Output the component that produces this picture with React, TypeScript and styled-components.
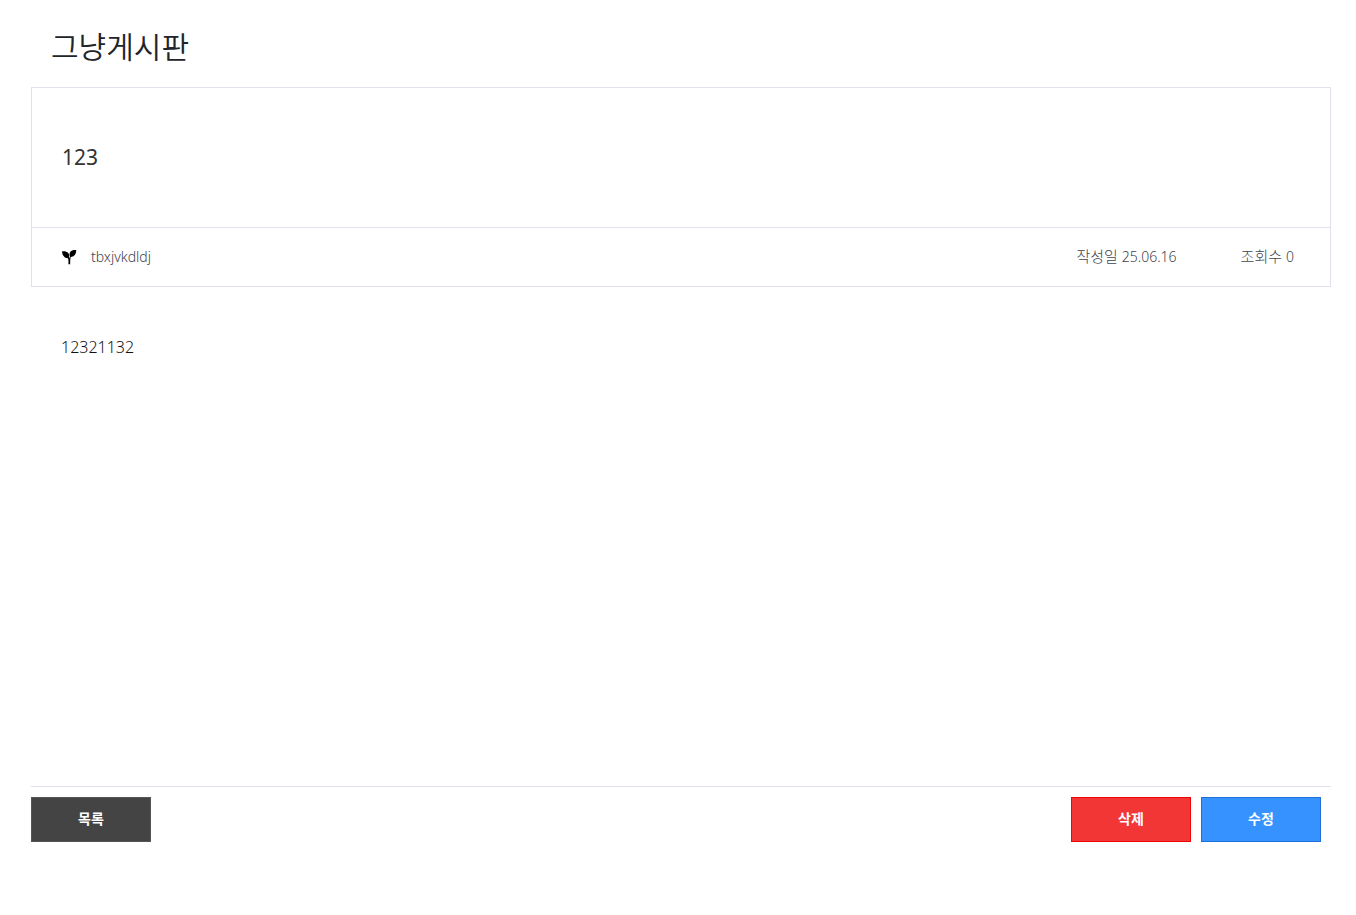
import React from "react";
import styled, { createGlobalStyle } from "styled-components";

const line = "#e1e1eb";

const GlobalStyle = createGlobalStyle`
  *, *::before, *::after { box-sizing: border-box; }
  body {
    margin: 0;
    background: #fff;
    color: #212529;
    font-family: "Noto Sans", "Noto Sans CJK KR", sans-serif;
    font-size: 16px;
    font-weight: 300;
    line-height: 24px;
  }
`;

const Page = styled.main`
  padding: 24px 25px 24px 31px;
`;

const BoardTitle = styled.h1`
  margin: 0 0 21px;
  padding-left: 20px;
  font-family: "Noto Sans CJK KR", sans-serif;
  font-size: 30px;
  font-weight: 350;
  line-height: 42px;
`;

const PostHeader = styled.header`
  border: 1px solid ${line};
`;

const PostTitle = styled.h2`
  margin: 0;
  padding: 54px 30px 55px;
  border-bottom: 1px solid ${line};
  color: #333;
  font-size: 21px;
  font-weight: 400;
  line-height: 30px;
`;

const PostInfo = styled.div`
  display: flex;
  align-items: center;
  justify-content: space-between;
  min-height: 58px;
  padding: 0 36px 0 29px;
  color: #40434c;
  font-size: 14px;
`;

const Author = styled.div`
  display: flex;
  align-items: center;
  gap: 14px;
`;

const Stats = styled.dl`
  display: flex;
  gap: 64px;
  margin: 0;
  padding-bottom: 2px;
`;

const Stat = styled.div`
  display: flex;
  align-items: baseline;
  gap: 4px;
`;

const StatLabel = styled.dt`
  font-size: 15px;
`;

const StatValue = styled.dd`
  margin: 0;
`;

const PostBody = styled.article`
  min-height: 499px;
  padding: 48px 30px;
  color: #111;
`;

const Actions = styled.footer`
  display: flex;
  gap: 10px;
  padding: 10px 10px 0 0;
  border-top: 1px solid ${line};
`;

const tones = {
  dark: { fill: "#444", edge: "#555" },
  red: { fill: "#f23535", edge: "#f00505" },
  blue: { fill: "#3592ff", edge: "#1f70d8" },
};

const ActionButton = styled.button<{ $tone: keyof typeof tones; $pushRight?: boolean }>`
  width: 120px;
  height: 45px;
  margin: 0;
  margin-right: ${(p) => (p.$pushRight ? "auto" : "0")};
  padding: 0 0 3px;
  border: 1px solid ${(p) => tones[p.$tone].edge};
  background: ${(p) => tones[p.$tone].fill};
  color: #fff;
  font-family: "Noto Sans CJK KR", sans-serif;
  font-size: 14px;
  font-weight: 700;
  line-height: 20px;
  cursor: pointer;
`;

function Seedling() {
  return (
    <svg width="16" height="16" viewBox="0 0 16 16" fill="#000" aria-hidden="true">
      <path d="M1 2.400C4.800 1.800 8 3.400 8.200 6.500C8.200 7.800 8 8.600 7.700 9.300C4 9.600 1.300 6.900 1 2.400Z" />
      <path d="M15.200 1C15.300 5.200 13 8 9.300 8.100C8.300 6.300 8.200 4.300 9.400 2.800C10.600 1.300 12.700 0.700 15.200 1Z" />
      <path d="M5.200 5.600C7.300 6.900 8 8.100 8.300 9.400C8.700 7.400 10 5.700 11.600 4.600L9.700 8.200C9.200 9.800 9.200 12 9.200 15.200H7.400C7.500 12 7.500 10.200 6.800 9Z" />
    </svg>
  );
}

export default function App() {
  return (
    <>
      <GlobalStyle />
      <Page>
        <BoardTitle>그냥게시판</BoardTitle>
        <PostHeader>
          <PostTitle>123</PostTitle>
          <PostInfo>
            <Author>
              <Seedling />
              <span>tbxjvkdldj</span>
            </Author>
            <Stats>
              <Stat>
                <StatLabel>작성일</StatLabel>
                <StatValue>25.06.16</StatValue>
              </Stat>
              <Stat>
                <StatLabel>조회수</StatLabel>
                <StatValue>0</StatValue>
              </Stat>
            </Stats>
          </PostInfo>
        </PostHeader>
        <PostBody>12321132</PostBody>
        <Actions>
          <ActionButton type="button" $tone="dark" $pushRight>목록</ActionButton>
          <ActionButton type="button" $tone="red">삭제</ActionButton>
          <ActionButton type="button" $tone="blue">수정</ActionButton>
        </Actions>
      </Page>
    </>
  );
}
